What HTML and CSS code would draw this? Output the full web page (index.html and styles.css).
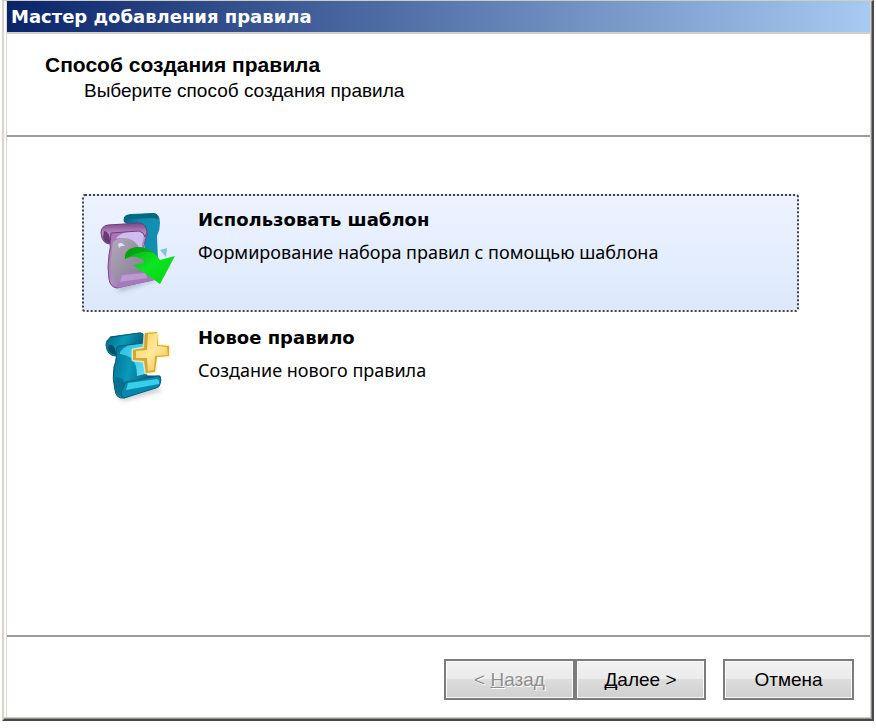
FILE: index.html
```html
<!DOCTYPE html>
<html lang="ru">
<head>
    <meta charset="UTF-8">
    <meta name="viewport" content="width=device-width, initial-scale=1.0">
    <title>Мастер добавления правила</title>
    <link rel="stylesheet" href="styles.css">
</head>
<body>
    <div class="wizard">
        <div class="titlebar">Мастер добавления правила</div>
        <div class="wizard-header">
            <h1>Способ создания правила</h1>
            <p>Выберите способ создания правила</p>
        </div>
        <div class="wizard-body">
            <button type="button" class="option selected">
                <svg class="option-icon" viewBox="0 0 100 100" aria-hidden="true">
                    <defs>
                        <linearGradient id="purple" x1="0" y1="0" x2="1" y2="1">
                            <stop offset="0" stop-color="#a56bb0"/>
                            <stop offset="0.5" stop-color="#b38ac4"/>
                            <stop offset="1" stop-color="#85509a"/>
                        </linearGradient>
                        <linearGradient id="roll" x1="0" y1="0" x2="0" y2="1">
                            <stop offset="0" stop-color="#7d4687"/>
                            <stop offset="0.5" stop-color="#bd8bc8"/>
                            <stop offset="1" stop-color="#8b5698"/>
                        </linearGradient>
                        <linearGradient id="gray" x1="0" y1="0" x2="1" y2="1">
                            <stop offset="0" stop-color="#b3a8be"/>
                            <stop offset="1" stop-color="#847b8c"/>
                        </linearGradient>
                        <linearGradient id="teal" x1="0" y1="0" x2="1" y2="0">
                            <stop offset="0" stop-color="#056684"/>
                            <stop offset="0.5" stop-color="#0790b2"/>
                            <stop offset="1" stop-color="#188eaf"/>
                        </linearGradient>
                        <linearGradient id="green" x1="0" y1="0" x2="1" y2="1">
                            <stop offset="0" stop-color="#0ba918"/>
                            <stop offset="0.5" stop-color="#0be51f"/>
                            <stop offset="1" stop-color="#09cf18"/>
                        </linearGradient>
                        <filter id="soft" x="-20%" y="-50%" width="140%" height="200%">
                            <feGaussianBlur stdDeviation="2"/>
                        </filter>
                    </defs>
                    <path d="M25 86 L60 76 L68 79 L31 91 Z" fill="#8796ad" opacity="0.5" filter="url(#soft)"/>
                    <path d="M34 21 Q32 14 40 13 L64 12 Q70 13 70 22 Q70 29 67 35 L68 59 L56 66 L54 25 L39 24 Z" fill="url(#teal)"/>
                    <path d="M34 20 Q33 15 39 14 L64 12 Q68 13 69 18 L63 17 L39 18 Q36 18 36 22 Z" fill="#076781"/>
                    <path d="M70 49 L77 47 L76 56 Z" fill="#82c5df"/>
                    <path d="M18 25 L49 22 Q57 24 57 34 Q53 45 54 53 L57 75 L66 78 L27 87 Q20 86 19 78 Q17 66 19 54 Q21 46 20 39 Z" fill="url(#purple)" stroke="#76458a" stroke-width="1"/>
                    <path d="M28 35 Q40 27 54 28 Q55 35 52 43 L52 65 L42 66 Q45 43 35 38 Q31 36 26 38 Z" fill="#cdbdf0"/>
                    <path d="M23 41 Q33 34 42 39 Q52 44 52 62 L54 73 L30 74 Q30 79 27 82 Q20 77 21 58 Z" fill="url(#gray)"/>
                    <path d="M28 43 Q32 40 35 45 Q31 44 29 47 Z" fill="#e5e1ff"/>
                    <path d="M31 73 L57 70 L66 76 Q66 79 61 80 L28 87 Q25 84 30 80 Z" fill="#a879ba"/>
                    <path d="M32 74 L56 72 L57 77 L30 81 Z" fill="#bb9acf"/>
                    <path d="M11 32 Q11 25 18 24 L50 22 Q56 23 57 31 L55 36 Q54 31 49 30 L21 32 L20 43 Q12 43 11 32 Z" fill="url(#roll)" stroke="#704078" stroke-width="1"/>
                    <path d="M14 30 Q20 30 20 42 Q14 42 13 36 Z" fill="#673b71"/>
                    <path d="M35 58 Q34 48 46 46 Q61 45 70 59 L85 55 L70 83 L43 64 L55 62 Q48 52 35 58 Z" fill="url(#green)"/>
                    <path d="M35 58 Q34 48 46 46 Q56 45 64 52 Q52 48 35 58 Z" fill="#079817" opacity="0.7"/>
                </svg>
                <span class="option-text">
                    <span class="option-title">Использовать шаблон</span>
                    <span class="option-note">Формирование набора правил с помощью шаблона</span>
                </span>
            </button>
            <button type="button" class="option">
                <svg class="option-icon" viewBox="0 0 100 100" aria-hidden="true">
                    <defs>
                        <linearGradient id="sheet" x1="0" y1="0" x2="1" y2="0.3">
                            <stop offset="0" stop-color="#056484"/>
                            <stop offset="0.5" stop-color="#089aba"/>
                            <stop offset="1" stop-color="#045878"/>
                        </linearGradient>
                        <linearGradient id="shine" x1="0" y1="0" x2="1" y2="1">
                            <stop offset="0" stop-color="#28bfe0"/>
                            <stop offset="1" stop-color="#62def5"/>
                        </linearGradient>
                        <linearGradient id="gold" x1="0" y1="0" x2="1" y2="1">
                            <stop offset="0" stop-color="#f4cd58"/>
                            <stop offset="0.5" stop-color="#ffe99b"/>
                            <stop offset="1" stop-color="#eab944"/>
                        </linearGradient>
                    </defs>
                    <path d="M27 78 L67 68 L72 72 L33 82 Z" fill="#999" opacity="0.5" filter="url(#soft)"/>
                    <path d="M20 18 L51 14 L57 31 Q52 43 57 57 L70 57 Q72 61 69 66 L34 79 Q26 80 25 71 Q22 59 24 48 Q28 37 25 31 Z" fill="url(#sheet)" stroke="#07536d" stroke-width="1"/>
                    <path d="M30 33 Q36 24 53 23 L55 55 L47 57 Q47 44 41 39 Q37 36 30 35 Z" fill="url(#shine)"/>
                    <path d="M25 58 Q34 58 35 65 L32 78 Q26 76 25 68 Z" fill="#067291"/>
                    <path d="M36 63 L68 57 Q72 58 70 65 Q70 68 66 69 L34 79 Q29 75 33 69 Z" fill="#0588ad" stroke="#05607d" stroke-width="1"/>
                    <path d="M38 64 L67 60 Q70 61 69 65 L36 71 Z" fill="#3acee9"/>
                    <path d="M16 26 Q16 20 22 18 L49 14 Q55 14 56 19 L54 24 L29 27 Q25 28 26 37 Q17 37 16 26 Z" fill="url(#sheet)" stroke="#055e79" stroke-width="1"/>
                    <path d="M19 26 Q25 24 26 36 Q19 35 18 29 Z" fill="#075069"/>
                    <path d="M55 14 L67 13 L68 26 L79 27 L79 37 L67 38 L65 53 L56 54 L54 42 L43 41 L43 31 L54 29 Z" fill="#fff5be" stroke="#fff3b8" stroke-width="3" stroke-linejoin="round" opacity="0.8"/>
                    <path d="M55 14 L67 13 L68 26 L79 27 L79 37 L67 38 L65 53 L56 54 L54 42 L43 41 L43 31 L54 29 Z" fill="#d7a735"/>
                    <path d="M58 15 L67 14 L67 27 L77 28 L78 36 L65 37 L64 51 L58 52 L57 39 L46 39 L46 32 L57 31 Z" fill="url(#gold)"/>
                </svg>
                <span class="option-text">
                    <span class="option-title">Новое правило</span>
                    <span class="option-note">Создание нового правила</span>
                </span>
            </button>
        </div>
        <div class="wizard-footer">
            <div class="nav-buttons">
                <button type="button" class="btn" disabled>&lt; <u>Н</u>азад</button>
                <button type="button" class="btn"><u>Д</u>алее &gt;</button>
            </div>
            <button type="button" class="btn">Отмена</button>
        </div>
    </div>
</body>
</html>
```

FILE: styles.css
```css
* {
    box-sizing: border-box;
}

body {
    margin: 0;
    padding: 0 2px 7px;
    background: #fff;
    color: #000;
    font-family: "Liberation Sans", Arial, sans-serif;
    font-size: 19px;
    height: 100vh;
}

.wizard {
    display: flex;
    flex-direction: column;
    min-height: 100%;
    padding: 0 2px 2px 3px;
    background: #fff;
    border-style: solid;
    border-width: 1px 2px 2px 2px;
    border-color: #d0cdc4 #48484c #48484c #d8d4cb;
    box-shadow: inset -1px -1px #918e88, inset -2px -2px #d4d0c8, inset 2px 0 #fff, inset 3px 0 #dedad1;
}

.titlebar {
    height: 33px;
    padding-left: 4px;
    border-bottom: 2px solid #d4d0c8;
    background: linear-gradient(to right, #0a246a, #a6caf0);
    color: #fff;
    font-family: "DejaVu Sans", Tahoma, sans-serif;
    font-size: 18px;
    font-weight: bold;
    line-height: 32px;
}

.wizard-header {
    height: 103px;
    padding: 18px 38px 0;
    border-bottom: 2px solid #9c9c9c;
}

.wizard-header h1 {
    margin: 0;
    font-size: 21px;
    line-height: 26px;
}

.wizard-header p {
    margin: 0;
    padding-left: 39px;
    line-height: 26px;
}

.wizard-body {
    flex: 1;
    padding: 57px 71px 0 75px;
}

.option {
    display: flex;
    width: 100%;
    height: 118px;
    padding: 5px 6px;
    border: 2px solid transparent;
    border-radius: 3px;
    background: none;
    color: #000;
    font-family: "Noto Sans", Tahoma, sans-serif;
    font-size: 18px;
    text-align: left;
}

.option.selected {
    border: 2px dotted #40444c;
    background: linear-gradient(to bottom, #edf3ff, #dce9fc);
}

.option-icon {
    flex: none;
    width: 100px;
    height: 100px;
}

.option-text {
    display: flex;
    flex-direction: column;
    padding: 3px 0 0 8px;
    line-height: 32px;
}

.option-title {
    font-family: "DejaVu Sans", Tahoma, sans-serif;
    font-weight: bold;
}

.wizard-footer {
    display: flex;
    justify-content: flex-end;
    gap: 17px;
    padding: 22px 16px 17px;
    border-top: 2px solid #9c9c9c;
}

.nav-buttons {
    display: flex;
}

.btn {
    width: 131px;
    height: 41px;
    border: 2px solid #7c7c7c;
    background: linear-gradient(to bottom, #f2f2f2, #ebebeb 50%, #dddddd 50%, #cfcfcf);
    box-shadow: inset 0 0 0 1px #fafafa;
    color: #000;
    font-family: inherit;
    font-size: 19px;
}

.btn u {
    text-decoration-skip-ink: none;
}

.btn:disabled {
    color: #8f8f8f;
    text-shadow: 1px 1px #fff;
}
```
